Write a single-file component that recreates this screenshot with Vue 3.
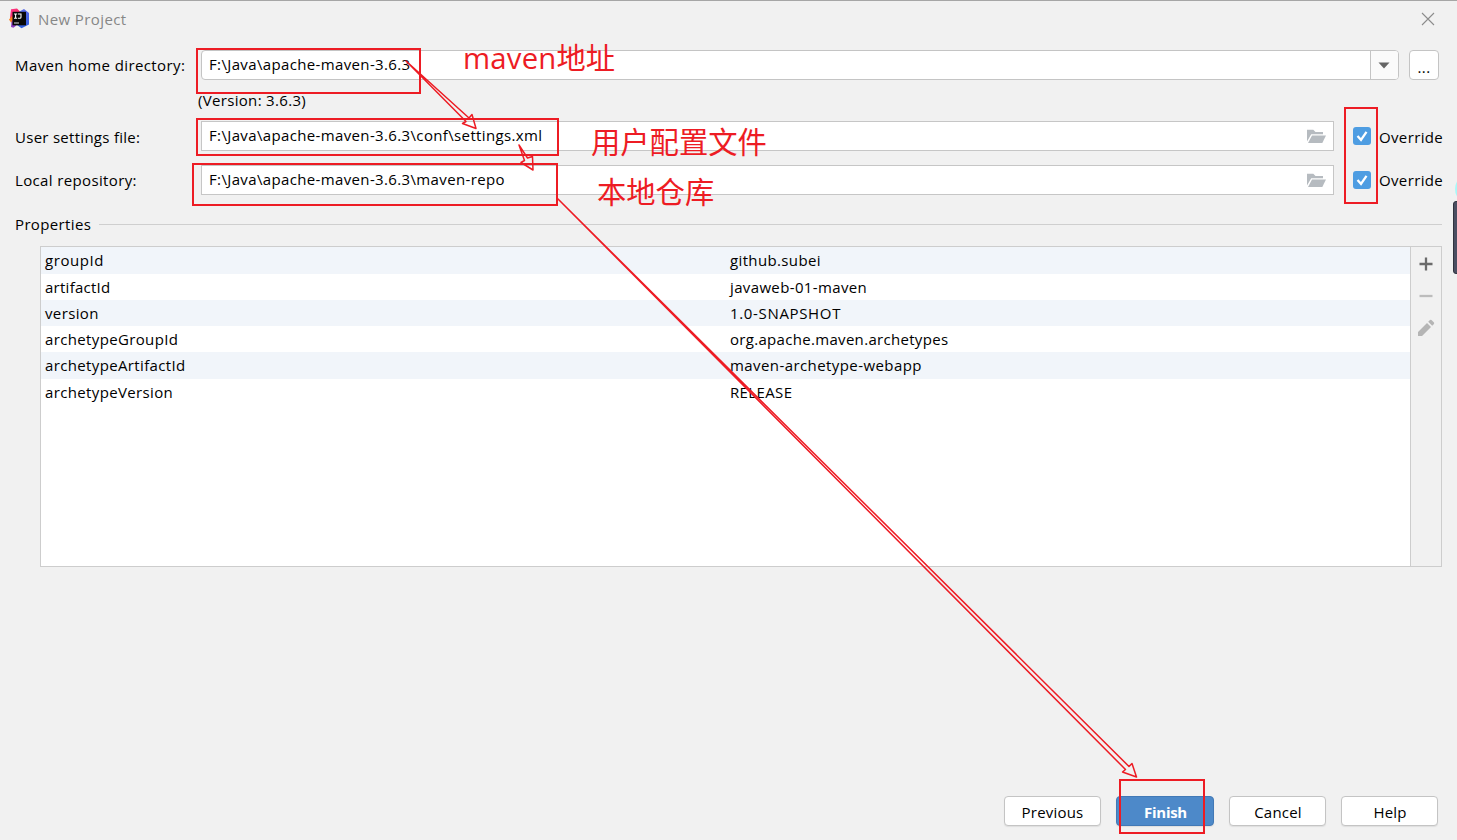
<script setup>
const rows = [
  { key: 'groupId', value: 'github.subei', k: 'r1k', v: 'r1v' },
  { key: 'artifactId', value: 'javaweb-01-maven', k: 'r2k', v: 'r2v' },
  { key: 'version', value: '1.0-SNAPSHOT', k: 'r3k', v: 'r3v' },
  { key: 'archetypeGroupId', value: 'org.apache.maven.archetypes', k: 'r4k', v: 'r4v' },
  { key: 'archetypeArtifactId', value: 'maven-archetype-webapp', k: 'r5k', v: 'r5v' },
  { key: 'archetypeVersion', value: 'RELEASE', k: 'r6k', v: 'r6v' },
]
const files = [
  { label: 'User settings file:', path: 'F:\\Java\\apache-maven-3.6.3\\conf\\settings.xml', l: 'lbl2', p: 'path2' },
  { label: 'Local repository:', path: 'F:\\Java\\apache-maven-3.6.3\\maven-repo', l: 'lbl3', p: 'path3' },
]
</script>

<template>
  <div class="dialog">
    <header class="titlebar">
      <svg class="logo" width="22" height="22" viewBox="0 0 22 22">
        <defs>
          <linearGradient id="pink" x1="0" y1="0" x2="1" y2="1">
            <stop offset="0" stop-color="#ff318c" /><stop offset="1" stop-color="#f0304a" />
          </linearGradient>
          <linearGradient id="blue" x1="0" y1="0" x2="0" y2="1">
            <stop offset="0" stop-color="#5b6be8" /><stop offset="1" stop-color="#2f5fe0" />
          </linearGradient>
        </defs>
        <path d="M2 1.200 L8 .5 L11 3.500 L9 14 L1 10z" fill="url(#pink)" />
        <path d="M0 11.500 L3 8 L5 14 L2 14.500z" fill="#fc801d" />
        <path d="M2.500 14 L5 10 L9 16 L4.500 19.800 L2 19z" fill="#8a3bc0" />
        <path d="M10.500 3.500 L15 1 L20 5 L20 16.500 L12.500 20.300 L8 17z" fill="url(#blue)" />
        <rect x="3.500" y="3.800" width="13.500" height="13.500" fill="#080808" />
        <path d="M5 6h3.200M6.600 6v4.200M5 10.200h3.200M9 6h3v3.200q0 1-1.200 1H9" fill="none" stroke="#fff" stroke-width="1.100" />
        <rect x="5" y="14.500" width="5" height="1" fill="#ddd" />
      </svg>
      <span class="title">New Project</span>
      <svg class="close" width="14" height="14" viewBox="0 0 14 14"><path d="M1 1L13 13M13 1L1 13" stroke="#8c8c8c" stroke-width="1.100" /></svg>
    </header>

    <section class="home-row">
      <span class="label"><span class="lbl1">Maven home directory:</span></span>
      <div class="combo">
        <span class="path path1">F:\Java\apache-maven-3.6.3</span>
        <span class="drop"><svg width="12" height="7" viewBox="0 0 12 7"><path d="M.5 .5h11L6 6.500z" fill="#656565" /></svg></span>
      </div>
      <div class="more">...</div>
    </section>
    <div class="version"><span class="ver">(Version: 3.6.3)</span></div>

    <section v-for="f in files" :key="f.label" class="file-row">
      <span class="label"><span :class="f.l">{{ f.label }}</span></span>
      <div class="field">
        <span class="path" :class="f.p">{{ f.path }}</span>
        <svg class="folder" width="19" height="15" viewBox="0 0 19 15">
          <path d="M0 .8H6.300L8.500 3H16V5.200H4.200L0 12.500z" fill="#b6bbc0" />
          <path d="M5 6.500H19L15.300 14H1z" fill="#b6bbc0" />
        </svg>
      </div>
      <span class="check"><svg width="18" height="18" viewBox="0 0 18 18"><path d="M4.500 9L8 12.800L13.500 4.800" fill="none" stroke="#fff" stroke-width="2.300" /></svg></span>
      <span class="ov">Override</span>
    </section>

    <div class="group"><span class="props">Properties</span><i></i></div>

    <section class="panel">
      <div class="table">
        <div v-for="r in rows" :key="r.key" class="row">
          <span class="cell"><span :class="r.k">{{ r.key }}</span></span>
          <span class="cell"><span :class="r.v">{{ r.value }}</span></span>
        </div>
      </div>
      <div class="tools">
        <svg width="14" height="14" viewBox="0 0 14 14"><path d="M7 .5V13.500M.5 7H13.500" stroke="#6b6b6b" stroke-width="2.300" /></svg>
        <svg width="14" height="14" viewBox="0 0 14 14"><path d="M.5 7H13.500" stroke="#bcbcbc" stroke-width="2.300" /></svg>
        <svg class="pencil" width="18" height="18" viewBox="0 0 18 18"><path d="M1 17V13L10 4L14 8L5 17zM11.200 2.800L13 1Q13.800 .5 14.500 1L17 3.500Q17.400 4.300 17 5L15.200 6.800z" fill="#b5b5b5" /></svg>
      </div>
    </section>

    <footer class="buttons">
      <div class="btn"><span class="b1">Previous</span></div>
      <div class="btn primary"><span class="b2">Finish</span></div>
      <div class="btn"><span class="b3">Cancel</span></div>
      <div class="btn"><span class="b4">Help</span></div>
    </footer>

    <div class="glow"></div>
    <div class="edge"></div>

    <svg class="marks" width="1457" height="840" viewBox="0 0 1457 840">
      <g fill="none" stroke="#ed1c24" stroke-width="2">
        <rect x="197" y="49" width="223" height="44" />
        <rect x="197" y="119" width="361" height="36" />
        <rect x="193" y="164" width="364" height="41" />
        <rect x="1345" y="108" width="32" height="95" />
        <rect x="1120" y="780" width="84" height="53" />
      </g>
      <g fill="none" stroke="#ed1c24" stroke-width="1.500" stroke-linejoin="round">
        <path d="M406 61L469 118L472 114.500L476 128.500L462.500 123.500L466 121.500z" />
        <path d="M519 145L527.500 158L532.500 156.500L533 170L521 162.500L524.500 160.500z" />
        <path d="M558 199L1129 766.500L1132 763.500L1136.500 777L1122.500 772L1125.500 769.500z" />
      </g>
    </svg>
    <span class="note n1"><span class="latin">maven</span>地址</span>
    <span class="note n2">用户配置文件</span>
    <span class="note n3">本地仓库</span>
  </div>
</template>

<style>
html, body { margin: 0; overflow: hidden; }
</style>

<style scoped>
.dialog { position: relative; box-sizing: border-box; width: 1457px; height: 840px; overflow: hidden; background: #f1f1f1; border-top: 1px solid #a6a6a6; font: 15px/20px "Open Sans", "Noto Sans", sans-serif; letter-spacing: .36px; color: #000; white-space: pre; }
.dialog * { box-sizing: border-box; }
svg { display: block; flex: none; }
.titlebar { display: flex; align-items: center; height: 36px; padding: 0 22px 0 9px; }
.title { margin-left: 7px; color: #878787; letter-spacing: .4px; }
.close { margin-left: auto; }
.label { flex: none; width: 186px; padding-top: 2px; }
.home-row { display: flex; align-items: center; height: 30px; margin-top: 13px; padding-left: 15px; }
.home-row .label { padding-top: 0; }
.lbl1 { letter-spacing: .4px; }
.combo { display: flex; align-items: center; width: 1198px; height: 30px; background: #fff; border: 1px solid #c4c4c4; border-radius: 4px; overflow: hidden; }
.path { padding-left: 7px; }
.path1 { padding-bottom: 2px; }
.drop { display: flex; align-items: center; justify-content: center; width: 28px; height: 28px; margin-left: auto; padding-right: 1px; background: #fafafa; border-left: 1px solid #c4c4c4; }
.more { width: 30px; height: 30px; margin-left: 10px; background: #fff; border: 1px solid #c4c4c4; border-radius: 4px; text-align: center; line-height: 32px; }
.version { height: 20px; margin: 10px 0 0 198px; }
.ver { letter-spacing: .32px; }
.file-row { display: flex; align-items: center; height: 30px; padding-left: 15px; margin-bottom: 14px; }
.version + .file-row { margin-top: 11px; }
.file-row + .file-row .label { padding-top: 0; }
.file-row + .file-row .ov { margin-top: 0; }
.lbl2 { letter-spacing: .28px; }
.field { display: flex; align-items: center; width: 1133px; height: 30px; background: #fff; border: 1px solid #c6c6c6; padding: 0 7px 2px 0; }
.folder { margin: 2px 0 0 auto; }
.check { width: 18px; height: 18px; margin-left: 19.300px; border-radius: 3px; background: #4e9de2; }
.ov { margin: 2px 0 0 7.700px; }
.group { display: flex; align-items: center; height: 20px; padding: 0 15px; margin-top: 19px; }
.group i { flex: 1; height: 1px; margin-left: 8px; background: #cfcfcf; }
.panel { display: flex; width: 1402px; height: 321px; margin: 12px 0 0 40px; border: 1px solid #cdcdcd; }
.table { flex: 1; min-width: 0; background: #fff; }
.row { display: grid; grid-template-columns: 685px 1fr; height: 26px; line-height: 26px; }
.row:nth-child(4n+1) { height: 27px; line-height: 27px; }
.row:nth-child(odd) { background: #f1f5fa; }
.cell { padding-left: 4px; }
.r1k { letter-spacing: .56px; }
.r2k { letter-spacing: .26px; }
.r3v { letter-spacing: .66px; }
.r4v { letter-spacing: .31px; }
.r5v { letter-spacing: .42px; }
.tools { display: flex; flex: none; flex-direction: column; align-items: center; width: 31px; padding-top: 10px; gap: 18px; border-left: 1px solid #cdcdcd; }
.pencil { margin-top: -2px; }
.buttons { display: flex; gap: 15px; margin: 229px 0 0 1004px; }
.btn { width: 97px; height: 30px; line-height: 31px; text-align: center; background: #fff; border: 1px solid #c4c4c4; border-radius: 4px; box-shadow: 0 1px 1px #dedede; letter-spacing: .2px; }
.primary { width: 98px; background: #4d89c9; border-color: #4279b6; color: #fff; font-weight: 700; letter-spacing: -.3px; }
.b2, .b3, .b4 { padding-left: 1px; }
.marks { position: absolute; left: 0; top: -1px; }
.edge { position: absolute; left: 1453px; top: 200px; width: 8px; height: 73px; border-radius: 3px; background: #4b4f62; border: 1px solid #30333e; }
.glow { position: absolute; left: 1455px; top: 178px; width: 12px; height: 20px; border-radius: 50%; background: #a9f8f8; }
.note { position: absolute; font-family: "Noto Sans CJK SC", sans-serif; font-size: 29.300px; line-height: 40px; letter-spacing: 0; color: #ed1c24; }
.latin { font-family: "Open Sans", sans-serif; letter-spacing: .2px; }
.n1 { left: 463px; top: 35px; }
.n2 { left: 591px; top: 119px; }
.n3 { left: 597px; top: 169px; }
</style>
